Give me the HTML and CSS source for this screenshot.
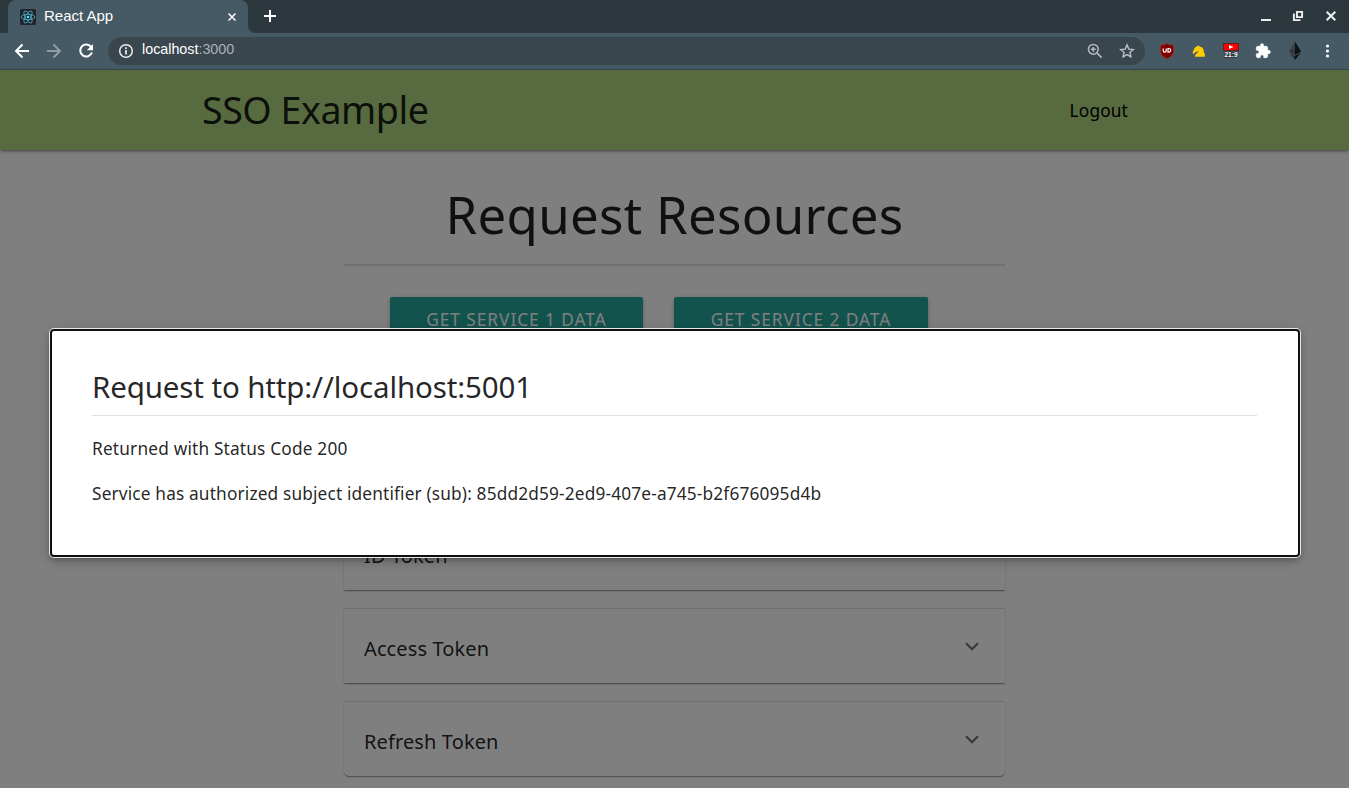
FILE: index.html
```html
<!DOCTYPE html>
<html lang="en">
<head>
<meta charset="utf-8">
<title>React App</title>
<link rel="stylesheet" href="styles.css">
</head>
<body>
<header class="browser">
  <div class="tabstrip">
    <div class="tab">
      <svg class="favicon" width="16" height="16" viewBox="0 0 16 16"><rect width="16" height="16" rx="1.5" fill="#20232a"/><g fill="none" stroke="#4fb3cc" stroke-width=".8"><ellipse cx="8" cy="8" rx="6.8" ry="2.7"/><ellipse cx="8" cy="8" rx="6.8" ry="2.7" transform="rotate(60 8 8)"/><ellipse cx="8" cy="8" rx="6.8" ry="2.7" transform="rotate(120 8 8)"/></g><circle cx="8" cy="8" r="1.3" fill="#61dafb"/></svg>
      <span class="tab-title">React App</span>
      <svg width="8" height="8" viewBox="0 0 8 8"><path d="M.5.5l7 7m0-7l-7 7" stroke="#fff" stroke-width="1.5"/></svg>
    </div>
    <svg class="tab-foot" width="8" height="8" viewBox="0 0 8 8"><path d="M0 0q0 8 8 8H0z" fill="#455a64"/></svg>
    <svg class="new-tab" width="12" height="12" viewBox="0 0 12 12"><path d="M6 0v12M0 6h12" stroke="#fff" stroke-width="2"/></svg>
    <div class="window-buttons">
      <svg width="12" height="12" viewBox="0 0 12 12"><path d="M2 10h10" stroke="#eee" stroke-width="2"/></svg>
      <svg width="12" height="12" viewBox="0 0 12 12"><path d="M4.900 1.900h5.200v5.200H4.900zM1.900 3.500v6.600h6.600" fill="none" stroke="#eee" stroke-width="1.900"/></svg>
      <svg width="12" height="12" viewBox="0 0 12 12"><path d="M1.700 1.700l8.600 8.600m0-8.600l-8.600 8.600" stroke="#eee" stroke-width="2"/></svg>
    </div>
  </div>
  <div class="toolbar">
    <div class="nav-buttons">
      <svg width="16" height="16" viewBox="0 0 16 16"><path d="M15 8H2m6.500-6.500L2 8l6.500 6.500" fill="none" stroke="#fff" stroke-width="2"/></svg>
      <svg width="16" height="16" viewBox="0 0 16 16"><path d="M1 8h13M7.500 1.500L14 8l-6.500 6.500" fill="none" stroke="#8f9ca2" stroke-width="2"/></svg>
      <svg width="16" height="16" viewBox="0 0 16 16"><path d="M13.300 4.200A6 6 0 1 0 13.900 9.500" fill="none" stroke="#fff" stroke-width="2.100"/><path d="M15 1v6.200H8.800z" fill="#fff"/></svg>
    </div>
    <div class="omnibox">
      <svg width="16" height="16" viewBox="0 0 16 16"><circle cx="8" cy="8" r="6.300" fill="none" stroke="#eceff1" stroke-width="1.500"/><path d="M8 7v4.500M8 4.200v1.700" stroke="#eceff1" stroke-width="1.700"/></svg>
      <span class="url">localhost<span class="port">:3000</span></span>
      <svg class="zoom-icon" width="16" height="16" viewBox="0 0 16 16"><circle cx="6.300" cy="6.300" r="4.900" fill="none" stroke="#b5bcc0" stroke-width="1.500"/><path d="M9.900 9.900l4.700 4.700M6.300 3.900v4.800M3.900 6.300h4.800" stroke="#b5bcc0" stroke-width="1.500"/></svg>
      <svg width="16" height="16" viewBox="0 0 16 16"><path d="M8 1.900l1.800 4.200 4.500.4-3.400 3 1 4.400L8 11.600l-3.900 2.300 1-4.400-3.400-3 4.500-.4z" fill="none" stroke="#b9c0c3" stroke-width="1.400"/></svg>
    </div>
    <div class="extensions">
      <svg width="16" height="16" viewBox="0 0 16 16"><path d="M8 .5c2 1.200 4.200 1.700 6.600 1.700v6c0 3.600-2.600 5.800-6.600 7.500-4-1.700-6.600-3.900-6.600-7.500v-6C3.800 2.200 6 1.700 8 .5z" fill="#800000" stroke="#a33b3b" stroke-width=".6"/><path d="M4.200 5.500v2.300q0 1.300 1.500 1.300t1.500-1.300V5.500M9 5.500v3.600h.8q1.900 0 1.900-1.800T9.800 5.500z" fill="none" stroke="#fff" stroke-width="1.200"/></svg>
      <svg width="16" height="16" viewBox="0 0 16 16"><path d="M4 13.700c0-2.700 2.600-3.700 4-5.700-1.500.7-3.200.6-4 1.500L2.700 11 1.500 9.700l2.200-4.900C4.300 3.800 6 3.900 7.500 2.200l1 1.300c3 .3 4.600 2.700 4.500 6.700h.8v3.500z" fill="#fc0"/></svg>
      <svg width="16" height="16" viewBox="0 0 16 16"><rect x=".4" y=".4" width="15.200" height="7.200" fill="#f00" stroke="#502020" stroke-width=".8"/><path d="M6 1.900L10.500 4 6 6.100z" fill="#fff"/><text class="ratio" x="8" y="14.400" text-anchor="middle">21:9</text></svg>
      <svg width="16" height="16" viewBox="0 0 24 24"><path d="M20.500 11H19V7c0-1.100-.9-2-2-2h-4V3.500a2.500 2.500 0 0 0-5 0V5H4c-1.100 0-2 .9-2 2v3.800h1.500a2.700 2.700 0 0 1 0 5.400H2V20c0 1.100.9 2 2 2h3.800v-1.500a2.700 2.700 0 0 1 5.400 0V22H17c1.100 0 2-.9 2-2v-4h1.500a2.500 2.500 0 0 0 0-5z" fill="#fff" stroke="#fff"/></svg>
      <svg width="16" height="20" viewBox="0 0 16 20"><path d="M8 .7L2 10.400 8 14l6-3.600z" fill="#303538"/><path d="M8 .7L2 10.400 8 7.700z" fill="#3c4346"/><path d="M8 .7v13.300l6-3.600z" fill="#101214"/><path d="M2 11.600L8 19v-3.900z" fill="#2c3235"/><path d="M14 11.600L8 19v-3.900z" fill="#0d0f10"/></svg>
      <svg width="16" height="16" viewBox="0 0 16 16" fill="#fff"><circle cx="8.500" cy="3" r="1.600"/><circle cx="8.500" cy="8" r="1.600"/><circle cx="8.500" cy="13" r="1.600"/></svg>
    </div>
  </div>
</header>

<div class="viewport">
  <nav class="navbar">
    <a class="brand">SSO Example</a>
    <a class="logout">Logout</a>
  </nav>
  <main class="content">
    <h1 class="page-title">Request Resources</h1>
    <div class="button-row">
      <a class="btn">GET SERVICE 1 DATA</a>
      <a class="btn">GET SERVICE 2 DATA</a>
    </div>
    <section class="tokens">
      <div class="card"><span>ID Token</span><svg width="14" height="9" viewBox="0 0 14 9"><path d="M1 1.200l6 6 6-6" fill="none" stroke="#757575" stroke-width="2.300"/></svg></div>
      <div class="card"><span>Access Token</span><svg width="14" height="9" viewBox="0 0 14 9"><path d="M1 1.200l6 6 6-6" fill="none" stroke="#757575" stroke-width="2.300"/></svg></div>
      <div class="card"><span>Refresh Token</span><svg width="14" height="9" viewBox="0 0 14 9"><path d="M1 1.200l6 6 6-6" fill="none" stroke="#757575" stroke-width="2.300"/></svg></div>
    </section>
  </main>
  <div class="backdrop"></div>
  <div class="modal">
    <h2 class="modal-title">Request to http://localhost:5001</h2>
    <p class="status">Returned with Status Code 200</p>
    <p class="subject">Service has authorized subject identifier (sub): 85dd2d59-2ed9-407e-a745-b2f676095d4b</p>
  </div>
</div>
</body>
</html>
```
FILE: styles.css
```css
* { box-sizing: border-box; }
body { margin: 0; width: 1349px; height: 788px; overflow: hidden; display: flex; flex-direction: column; font-family: "Noto Sans", "Open Sans", sans-serif; }
svg { display: block; flex: none; }

.browser { flex: none; height: 70px; font-family: "Liberation Sans", Arial, sans-serif; }
.tabstrip { height: 33px; background: #2d383e; display: flex; align-items: center; padding-left: 8px; }
.tab { width: 240px; height: 33px; padding: 0 12px; background: #455a64; border-radius: 8px 8px 0 0; display: flex; align-items: center; color: #fff; }
.tab-title { flex: 1; margin-left: 8px; font-size: 15px; line-height: 20px; padding-bottom: 1px; }
.tab-foot { align-self: flex-end; }
.new-tab { margin-left: 8px; margin-top: -1px; }
.window-buttons { margin-left: auto; display: flex; gap: 21px; padding-right: 12px; margin-top: -1px; }
.toolbar { height: 37px; background: #455a64; border-bottom: 1px solid #34444c; display: flex; align-items: center; padding: 0 13px 0 14px; }
.nav-buttons { display: flex; gap: 16px; width: 94px; }
.omnibox { width: 1037px; height: 28px; border-radius: 14px; background: #39464d; display: flex; align-items: center; padding: 0 10px; }
.url { margin: -4px 0 0 8px; font-size: 14.3px; line-height: 18px; color: #fff; }
.port { color: #a9b0b4; }
.zoom-icon { margin-left: auto; margin-right: 16px; }
.extensions { flex: 1; display: flex; align-items: center; justify-content: space-between; padding-left: 14px; margin-right: 1px; }
.ratio { font-family: "Liberation Sans", Arial, sans-serif; font-size: 6.500px; font-weight: bold; fill: #fff; stroke: #283338; stroke-width: 1.5px; paint-order: stroke; }

.viewport { position: relative; flex: 1; background: #fff; color: rgba(0, 0, 0, .87); overflow: hidden; }
.navbar { height: 80px; background: #aed581; padding: 0 221px 0 202px; display: flex; align-items: center; justify-content: space-between; box-shadow: 0 2px 2px rgba(0, 0, 0, .14), 0 3px 1px -2px rgba(0, 0, 0, .12), 0 1px 5px rgba(0, 0, 0, .2); }
.brand { font-size: 37.600px; line-height: 80px; letter-spacing: -.45px; }
.logout { padding-top: 2px; font-size: 17.300px; line-height: 78px; letter-spacing: .15px; color: #000; }
.content { width: 661px; margin-left: 344px; }
.page-title { height: 116px; margin: 0; padding-top: 34px; border-bottom: 2px solid #e0e0e0; font-size: 51px; line-height: 60px; font-weight: 400; letter-spacing: .27px; text-align: center; white-space: nowrap; }
.button-row { display: flex; gap: 31px; padding: 31px 0 0 46px; }
.btn { width: 253px; height: 45px; border-radius: 2px; background: #26a69a; color: #fff; font-size: 17.300px; line-height: 45px; letter-spacing: .95px; text-align: center; white-space: nowrap; box-shadow: 0 2px 2px rgba(0, 0, 0, .14), 0 3px 1px -2px rgba(0, 0, 0, .12), 0 1px 5px rgba(0, 0, 0, .2); }
.btn:last-child { width: 254px; }
.tokens { margin-top: 173px; display: flex; flex-direction: column; gap: 18px; }
.card { height: 75px; padding: 5px 26px 0 20px; border-top: 1px solid #e0e0e0; background: #fff; display: flex; align-items: center; justify-content: space-between; font-size: 20px; line-height: 28px; letter-spacing: .12px; box-shadow: 0 2px 1px -1px rgba(0, 0, 0, .2), 0 1px 1px rgba(0, 0, 0, .14), 0 1px 3px rgba(0, 0, 0, .12); }
.card svg { margin-top: -4px; }
.card:last-child { border-radius: 0 0 5px 5px; }

.backdrop { position: absolute; inset: 0; background: rgba(0, 0, 0, .5); }
.modal { position: absolute; left: 50px; top: 259px; width: 1250px; height: 228px; padding: 36px 41px 0 40px; background: #fff; border: 2px solid #101010; border-radius: 4px; box-shadow: 0 0 0 1px #e8e8e8, 0 3px 5px -1px rgba(0, 0, 0, .2), 0 5px 8px rgba(0, 0, 0, .14), 0 1px 14px rgba(0, 0, 0, .12); }
.modal-title { height: 49px; margin: 0; border-bottom: 1px solid #e0e0e0; font-size: 29.500px; line-height: 40px; font-weight: 400; letter-spacing: -.13px; }
.status, .subject { margin: 0; font-size: 17.300px; line-height: 26px; white-space: nowrap; }
.status { padding-top: 20px; letter-spacing: .17px; }
.subject { padding-top: 19px; letter-spacing: .145px; }
```
